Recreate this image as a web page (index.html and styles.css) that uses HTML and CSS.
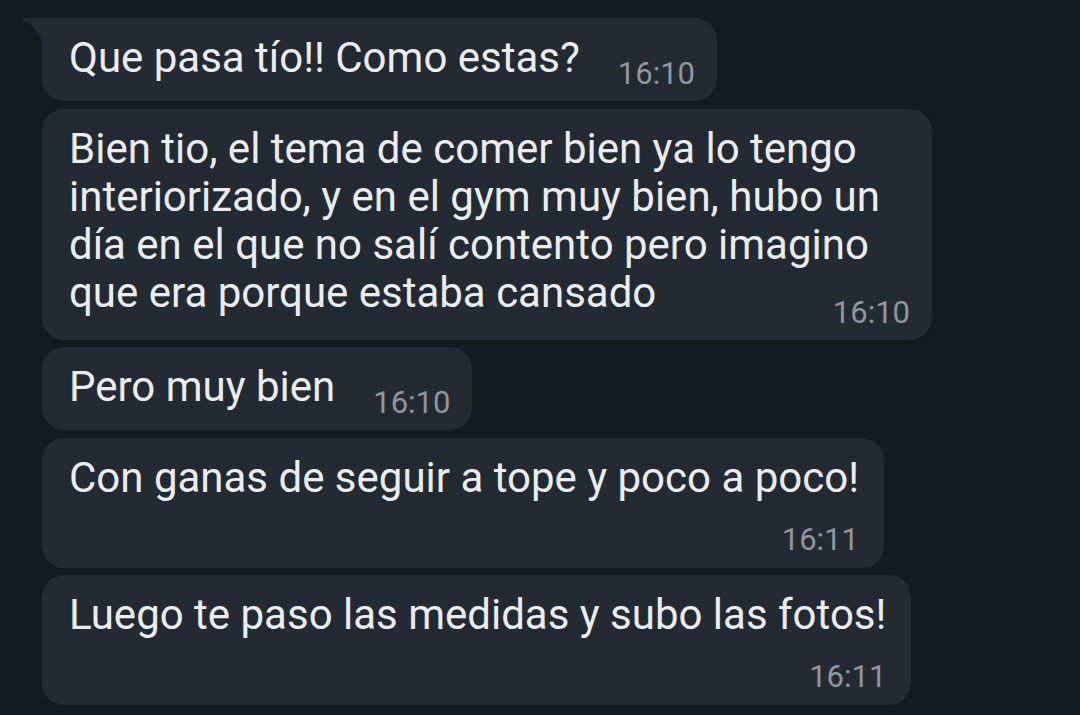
FILE: index.html
```html
<!DOCTYPE html>
<html lang="es">
<head>
<meta charset="utf-8">
<title>Chat</title>
<link rel="stylesheet" href="styles.css">
</head>
<body>
<main class="chat">
  <div class="bubble bubble-first row">
    <svg class="tail" width="22" height="30" viewBox="0 0 22 30"><path d="M0 0 H22 V30 C20 18 12 8 3 3 C0 1.5 0 0 0 0 Z" fill="#232a32"/></svg>
    <span class="text">Que pasa tío!! Como estas?</span>
    <span class="time">16:10</span>
  </div>
  <div class="bubble wide">
    <p class="text">Bien tio, el tema de comer bien ya lo tengo<br>interiorizado, y en el gym muy bien, hubo un<br>día en el que no salí contento pero imagino<br>que era porque estaba cansado</p>
    <span class="time overlap">16:10</span>
  </div>
  <div class="bubble row">
    <span class="text">Pero muy bien</span>
    <span class="time">16:10</span>
  </div>
  <div class="bubble stack">
    <span class="text">Con ganas de seguir a tope y poco a poco!</span>
    <span class="time">16:11</span>
  </div>
  <div class="bubble stack">
    <span class="text">Luego te paso las medidas y subo las fotos!</span>
    <span class="time">16:11</span>
  </div>
</main>
</body>
</html>
```
FILE: styles.css
```css
html, body {
  margin: 0;
  padding: 0;
  background: #151a20;
  height: 100%;
  overflow: hidden;
}
body {
  font-family: Roboto, "Noto Sans", sans-serif;
  color: #e9edef;
}
.chat {
  display: flex;
  flex-direction: column;
  align-items: flex-start;
  gap: 7.5px;
  padding: 18px 0 0 42px;
}
.bubble {
  position: relative;
  background: #232a32;
  border-radius: 22px;
  padding: 16px 22px 9px 27px;
  box-sizing: border-box;
}
.bubble-first {
  border-top-left-radius: 0;
}
.tail {
  position: absolute;
  left: -20px;
  top: 0;
}
.text {
  font-size: 42px;
  line-height: 48px;
  margin: 0;
}
.time {
  font-size: 31px;
  line-height: 36px;
  color: #8e969e;
  white-space: nowrap;
}
.row {
  display: flex;
  align-items: flex-start;
  gap: 38px;
}
.row .time {
  margin-top: 22px;
}
.wide {
  width: 890px;
}
.overlap {
  display: block;
  text-align: right;
  margin-top: -22px;
}
.stack {
  display: flex;
  flex-direction: column;
  padding-right: 25px;
  padding-bottom: 10px;
}
.stack .time {
  align-self: flex-end;
  margin-top: 20px;
}
```
